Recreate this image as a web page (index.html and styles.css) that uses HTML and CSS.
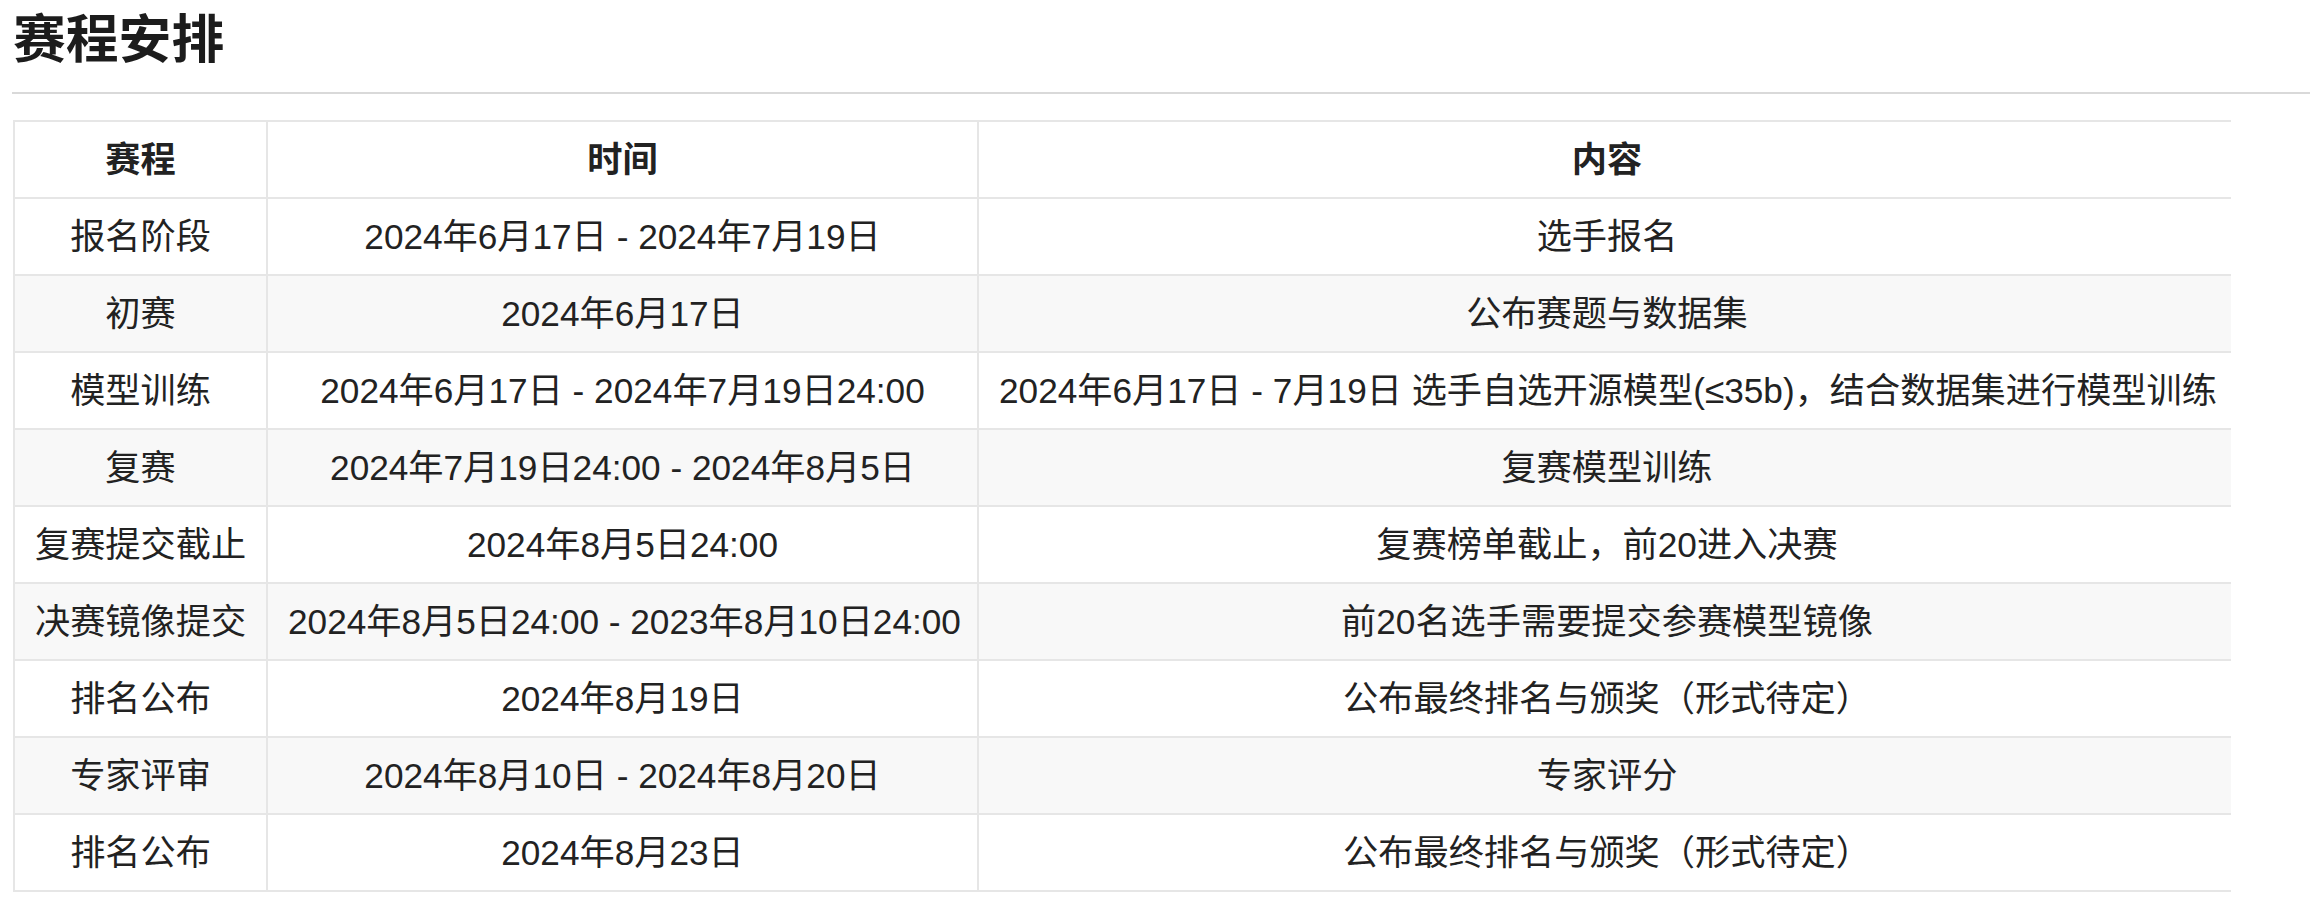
FILE: index.html
```html
<!DOCTYPE html>
<html lang="zh-CN">
<head>
<meta charset="utf-8">
<title>赛程安排</title>
<link rel="stylesheet" href="styles.css">
</head>
<body>
<div class="doc">
  <h2 class="title">赛程安排</h2>
  <div class="table-wrap">
    <table class="schedule">
      <colgroup>
        <col class="c-stage">
        <col class="c-time">
        <col class="c-content">
      </colgroup>
      <thead>
        <tr><th>赛程</th><th>时间</th><th>内容</th></tr>
      </thead>
      <tbody>
        <tr><td>报名阶段</td><td>2024年6月17日 - 2024年7月19日</td><td>选手报名</td></tr>
        <tr><td>初赛</td><td>2024年6月17日</td><td>公布赛题与数据集</td></tr>
        <tr><td>模型训练</td><td>2024年6月17日 - 2024年7月19日24:00</td><td>2024年6月17日 - 7月19日 选手自选开源模型(≤35b)，结合数据集进行模型训练</td></tr>
        <tr><td>复赛</td><td>2024年7月19日24:00 - 2024年8月5日</td><td>复赛模型训练</td></tr>
        <tr><td>复赛提交截止</td><td>2024年8月5日24:00</td><td>复赛榜单截止，前20进入决赛</td></tr>
        <tr><td>决赛镜像提交</td><td>2024年8月5日24:00 - 2023年8月10日24:00</td><td>前20名选手需要提交参赛模型镜像</td></tr>
        <tr><td>排名公布</td><td>2024年8月19日</td><td>公布最终排名与颁奖（形式待定）</td></tr>
        <tr><td>专家评审</td><td>2024年8月10日 - 2024年8月20日</td><td>专家评分</td></tr>
        <tr><td>排名公布</td><td>2024年8月23日</td><td>公布最终排名与颁奖（形式待定）</td></tr>
      </tbody>
    </table>
  </div>
</div>
</body>
</html>
```
FILE: styles.css
```css
html, body {
  margin: 0;
  padding: 0;
  background: #ffffff;
}

body {
  color: #222222;
  font-family: "Liberation Sans", Arial, "Noto Sans CJK SC", sans-serif;
}

.doc {
  padding-left: 12px;
}

.title {
  margin: 7px 0 26px;
  padding: 0 0 19px 1px;
  font-size: 52.8px;
  line-height: 66px;
  font-weight: 700;
  color: #1c1c1c;
  border-bottom: 2px solid #d9d9d9;
}

.table-wrap {
  width: 2218px;
  margin-left: 1px;
  overflow: hidden;
}

.schedule {
  border-collapse: collapse;
  table-layout: fixed;
  width: 2222px;
}

.c-stage { width: 253px; }
.c-time { width: 711px; }
.c-content { width: 1258px; }

.schedule th,
.schedule td {
  border: 2px solid #e6e6e6;
  padding: 11px 20px;
  font-size: 35.2px;
  line-height: 53px;
  text-align: center;
  white-space: nowrap;
  color: #222222;
}

.schedule th {
  font-weight: 700;
}

.schedule tbody tr:nth-child(even) {
  background: #f8f8f8;
}
```
